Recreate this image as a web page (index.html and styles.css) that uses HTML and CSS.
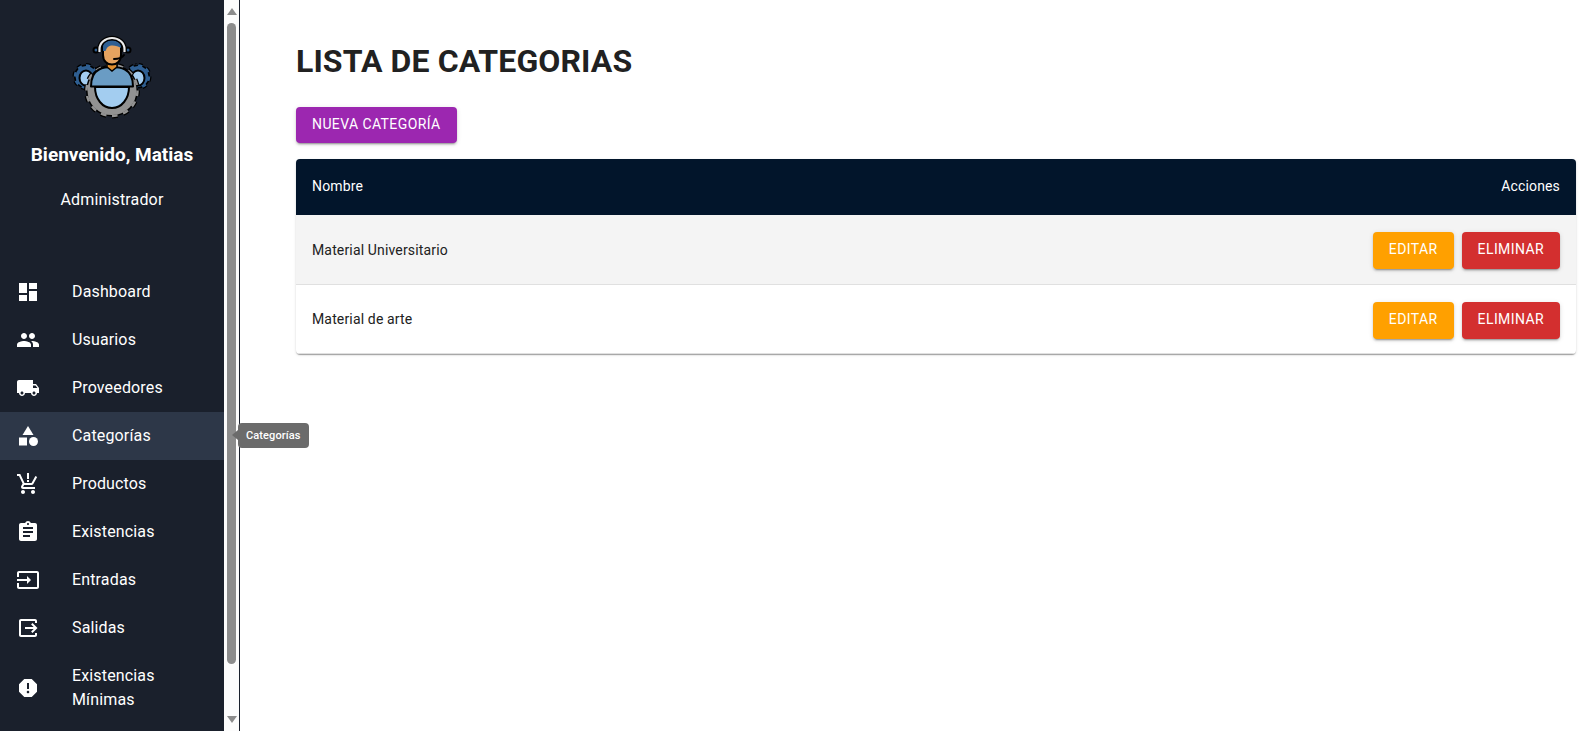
FILE: index.html
```html
<!DOCTYPE html>
<html lang="es">
<head>
<meta charset="utf-8">
<title>Lista de categorias</title>
<link rel="stylesheet" href="styles.css">
</head>
<body>
<div class="shell">
  <aside class="sidebar">
    <div class="sidebar-scroll">
      <header class="profile">
        <svg class="logo" viewBox="70 34 84 86" width="84" height="86" aria-hidden="true">
          <circle class="base" cx="86" cy="76.500" r="12"/>
          <circle class="side-teeth-o" cx="86" cy="76.500" r="11" pathLength="80"/>
          <circle class="side-fill" cx="86" cy="76.500" r="10.500"/>
          <circle class="side-teeth" cx="86" cy="76.500" r="11" pathLength="80"/>
          <ellipse class="light" cx="86" cy="78" rx="6.500" ry="7.500"/>
          <circle class="base" cx="138" cy="76.500" r="12"/>
          <circle class="side-teeth-o" cx="138" cy="76.500" r="11" pathLength="80"/>
          <circle class="side-fill" cx="138" cy="76.500" r="10.500"/>
          <circle class="side-teeth" cx="138" cy="76.500" r="11" pathLength="80"/>
          <ellipse class="light" cx="138" cy="78" rx="6.500" ry="7.500"/>
          <circle class="base" cx="112" cy="90.500" r="26"/>
          <circle class="big-teeth-o" cx="112" cy="90.500" r="26" pathLength="140"/>
          <circle class="big-fill" cx="112" cy="90.500" r="24.500"/>
          <circle class="big-teeth" cx="112" cy="90.500" r="25.500" pathLength="140"/>
          <path class="light" d="M95 87h34c0 12-7.500 21-17 21s-17-9-17-21z"/>
          <path class="torso" d="M91 86.500c0-8 2-14 8-17 4-2 7-2.500 13-2.500s9 .5 13 2.500c6 3 8 9 8 17z"/>
          <path class="neck" d="M107 63h10v4l-5 4-5-4z"/>
          <circle class="ear" cx="96" cy="50" r="2.500"/>
          <circle class="ear" cx="128" cy="50" r="2.500"/>
          <path class="head" d="M103 47c0-4 4-6.500 9-6.500s9 2.500 9 6.500v8c0 6-4 9.500-9 9.500s-9-3.500-9-9.500z"/>
          <path class="hair" d="M103 51v-4c0-4 4-6.500 9-6.500s9 2.500 9 6.500v1c-3-2-8-3-11.500-2-2 .7-3 2.500-4 5z"/>
          <path class="band-o" d="M99.500 52v-3c0-6 5.500-11 12.500-11s12.500 5 12.500 11v3"/>
          <path class="band" d="M99.500 52v-3c0-6 5.500-11 12.500-11s12.500 5 12.500 11v3"/>
          <path class="mic" d="M124 55c-2 3-5 4-10 4"/>
        </svg>
        <h2 class="welcome">Bienvenido, Matias</h2>
        <p class="role">Administrador</p>
      </header>
      <nav class="menu">
        <a class="menu-item"><svg class="icon" viewBox="0 0 24 24"><path d="M3 13h8V3H3v10zm0 8h8v-6H3v6zm10 0h8V11h-8v10zm0-18v6h8V3h-8z"/></svg><span>Dashboard</span></a>
        <a class="menu-item"><svg class="icon" viewBox="0 0 24 24"><path d="M16 11c1.660 0 2.990-1.340 2.990-3S17.660 5 16 5c-1.660 0-3 1.340-3 3s1.340 3 3 3zm-8 0c1.660 0 2.990-1.340 2.990-3S9.660 5 8 5C6.340 5 5 6.340 5 8s1.340 3 3 3zm0 2c-2.330 0-7 1.170-7 3.500V19h14v-2.500c0-2.330-4.670-3.500-7-3.500zm8 0c-.29 0-.62.02-.97.05 1.160.84 1.970 1.970 1.970 3.450V19h6v-2.500c0-2.330-4.670-3.500-7-3.500z"/></svg><span>Usuarios</span></a>
        <a class="menu-item"><svg class="icon" viewBox="0 0 24 24"><path d="M20 8h-3V4H3c-1.100 0-2 .9-2 2v11h2c0 1.660 1.340 3 3 3s3-1.340 3-3h6c0 1.660 1.340 3 3 3s3-1.340 3-3h2v-5l-3-4zM6 18.500c-.83 0-1.500-.67-1.500-1.500s.67-1.500 1.500-1.500 1.500.67 1.500 1.500-.67 1.500-1.500 1.500zm13.500-9l1.960 2.500H17V9.500h2.500zm-1.500 9c-.83 0-1.500-.67-1.500-1.500s.67-1.500 1.500-1.500 1.500.67 1.500 1.500-.67 1.500-1.500 1.500z"/></svg><span>Proveedores</span></a>
        <a class="menu-item is-active"><svg class="icon" viewBox="0 0 24 24"><path d="M12 2l-5.500 9h11z"/><circle cx="17.500" cy="17.500" r="4.500"/><path d="M3 13.500h8v8H3z"/></svg><span>Categorías</span></a>
        <a class="menu-item"><svg class="icon" viewBox="0 0 24 24"><path d="M11 1h2v6h-2zM11 8h2v2h-2z"/><path d="M7 18c-1.100 0-1.990.9-1.990 2S5.900 22 7 22s2-.9 2-2-.9-2-2-2zm10 0c-1.100 0-1.990.9-1.990 2s.89 2 1.990 2 2-.9 2-2-.9-2-2-2zm-9.830-3.250l.03-.12.9-1.630h7.450c.75 0 1.410-.41 1.750-1.030l3.860-7.010L19.420 4h-.01l-1.100 2-2.760 5H8.530l-.13-.27L6.160 6l-.95-2-.94-2H1v2h2l3.600 7.590-1.350 2.450c-.16.28-.25.61-.25.96 0 1.100.9 2 2 2h12v-2H7.420c-.13 0-.25-.11-.25-.25z"/></svg><span>Productos</span></a>
        <a class="menu-item"><svg class="icon" viewBox="0 0 24 24"><path d="M19 3h-4.180C14.400 1.840 13.300 1 12 1c-1.300 0-2.400.84-2.820 2H5c-1.100 0-2 .9-2 2v14c0 1.100.9 2 2 2h14c1.100 0 2-.9 2-2V5c0-1.100-.9-2-2-2zm-7 0c.55 0 1 .45 1 1s-.45 1-1 1-1-.45-1-1 .45-1 1-1zm2 14H7v-2h7v2zm3-4H7v-2h10v2zm0-4H7V7h10v2z"/></svg><span>Existencias</span></a>
        <a class="menu-item"><svg class="icon" viewBox="0 0 24 24"><path d="M21 3.010H3c-1.100 0-2 .9-2 2V9h2V4.990h18v14.030H3V15H1v4.010c0 1.100.9 1.980 2 1.980h18c1.100 0 2-.88 2-1.980v-14c0-1.110-.9-2-2-2zM11 16l4-4-4-4v3H1v2h10v3z"/></svg><span>Entradas</span></a>
        <a class="menu-item"><svg class="icon" viewBox="0 0 24 24"><path d="M15.090 15.590L16.500 17l5-5-5-5-1.410 1.410L17.670 11H9v2h8.670l-2.580 2.590z"/><path d="M19 19H5V5h14v2h2V5c0-1.100-.9-2-2-2H5c-1.110 0-2 .9-2 2v14c0 1.100.89 2 2 2h14c1.100 0 2-.9 2-2v-2h-2v2z"/></svg><span>Salidas</span></a>
        <a class="menu-item"><svg class="icon" viewBox="0 0 24 24"><path d="M15.730 3H8.270L3 8.270v7.460L8.270 21h7.460L21 15.730V8.270L15.730 3zM12 17.300c-.72 0-1.300-.58-1.300-1.300 0-.72.58-1.300 1.300-1.300.72 0 1.300.58 1.300 1.300 0 .72-.58 1.300-1.300 1.300zm1-4.300h-2V7h2v6z"/></svg><span>Existencias Mínimas</span></a>
      </nav>
    </div>
    <div class="scrollbar" aria-hidden="true">
      <i class="arrow arrow-up"></i>
      <i class="thumb"></i>
      <i class="arrow arrow-down"></i>
    </div>
  </aside>
  <div class="tooltip">Categorías</div>
  <main class="content">
    <h1 class="page-title">LISTA DE CATEGORIAS</h1>
    <button class="btn btn-purple btn-new">Nueva categoría</button>
    <div class="table-card">
      <table class="table">
        <thead>
          <tr><th>Nombre</th><th class="right">Acciones</th></tr>
        </thead>
        <tbody>
          <tr class="odd">
            <td class="name">Material Universitario</td>
            <td class="right"><div class="actions"><button class="btn btn-orange">Editar</button><button class="btn btn-red">Eliminar</button></div></td>
          </tr>
          <tr class="even">
            <td class="name">Material de arte</td>
            <td class="right"><div class="actions"><button class="btn btn-orange">Editar</button><button class="btn btn-red">Eliminar</button></div></td>
          </tr>
        </tbody>
      </table>
    </div>
  </main>
</div>
</body>
</html>
```

FILE: styles.css
```css
* { box-sizing: border-box; }
html, body { margin: 0; height: 100%; }
body {
  font-family: Roboto, "Liberation Sans", sans-serif;
  color: #212121;
  background: #fff;
  overflow: hidden;
}
.shell { display: flex; height: 731px; position: relative; }

.sidebar {
  flex: 0 0 240px;
  display: flex;
  height: 100%;
  border-right: 1px solid #1a202c;
}
.sidebar-scroll {
  flex: 0 0 224px;
  background: #1a202c;
  color: #fff;
  overflow: hidden;
}
.profile { padding-top: 34px; text-align: center; }
.logo { display: block; margin: 0 auto; }
.welcome { margin: 21px 0 0; font-size: 19px; line-height: 27px; font-weight: 700; }
.role { margin: 20px 0 0; font-size: 16px; line-height: 24px; letter-spacing: 0.15px; }

.logo .base { fill: #000; }
.logo .side-fill { fill: #2f5f92; }
.logo .side-teeth-o { fill: none; stroke: #000; stroke-width: 5; stroke-dasharray: 5 5; }
.logo .side-teeth { fill: none; stroke: #2f5f92; stroke-width: 2.500; stroke-dasharray: 5 5; }
.logo .big-teeth-o { fill: none; stroke: #000; stroke-width: 4; stroke-dasharray: 5 5; }
.logo .big-fill { fill: #929292; }
.logo .big-teeth { fill: none; stroke: #929292; stroke-width: 2.500; stroke-dasharray: 5 5; }
.logo .light { fill: #a3cdf0; stroke: #000; stroke-width: 2; }
.logo .torso { fill: #6a9cc4; stroke: #000; stroke-width: 2; stroke-linejoin: round; }
.logo .neck { fill: #e08e2e; stroke: #000; stroke-width: 1.500; }
.logo .ear { fill: #2f5f92; stroke: #000; stroke-width: 2; }
.logo .head { fill: #e5a360; stroke: #000; stroke-width: 2; }
.logo .hair { fill: #2f5f92; }
.logo .band-o { fill: none; stroke: #000; stroke-width: 4.500; }
.logo .band { fill: none; stroke: #ececec; stroke-width: 2.200; }
.logo .mic { fill: none; stroke: #000; stroke-width: 2; stroke-linecap: round; }

.menu { margin-top: 56px; }
.menu-item {
  display: flex;
  align-items: center;
  padding: 8px 16px;
  font-size: 16px;
  line-height: 24px;
  letter-spacing: 0.15px;
  color: #fff;
}
.menu-item > span { flex: 1; margin: 4px 0; }
.menu-item.is-active { background: #2d3748; }
.icon { flex: 0 0 24px; width: 24px; height: 24px; margin-right: 32px; fill: #fff; }

.scrollbar {
  flex: 1;
  display: flex;
  flex-direction: column;
  align-items: center;
  background: #fcfcfc;
  padding: 8px 0;
}
.arrow { width: 0; height: 0; border-left: 5px solid transparent; border-right: 5px solid transparent; }
.arrow-up { border-bottom: 7px solid #8c8c8c; }
.arrow-down { border-top: 7px solid #8c8c8c; }
.thumb {
  width: 9px;
  height: 641px;
  margin: 8px 0 52px;
  background: #8c8c8c;
  border-radius: 5px;
}

.tooltip {
  position: absolute;
  left: 238px;
  top: 423px;
  padding: 4px 8px;
  background: #6b6b6b;
  color: #fff;
  font-size: 11px;
  line-height: 17px;
  font-weight: 500;
  letter-spacing: 0.1px;
  border-radius: 4px;
}
.tooltip::before {
  content: "";
  position: absolute;
  left: -6px;
  top: 7px;
  border-top: 5.500px solid transparent;
  border-bottom: 5.500px solid transparent;
  border-right: 6px solid #6b6b6b;
}

.content { flex: 1; min-width: 0; padding: 40px 16px 0 56px; }
.page-title { margin: 0 0 25px; font-size: 32px; line-height: 42px; font-weight: 700; letter-spacing: 0.1px; color: #212121; }

.btn {
  display: inline-block;
  border: 0;
  border-radius: 4px;
  padding: 5px 16px 7px;
  font-family: inherit;
  font-size: 14px;
  line-height: 24.500px;
  font-weight: 400;
  letter-spacing: 0.4px;
  text-transform: uppercase;
  color: #fff;
  box-shadow: 0 3px 1px -2px rgba(0,0,0,.2), 0 2px 2px 0 rgba(0,0,0,.14), 0 1px 5px 0 rgba(0,0,0,.12);
}
.btn-purple { background: #9c27b0; }
.btn-orange { background: #ffa000; }
.btn-red { background: #d32f2f; }
.btn-new { display: block; height: 36px; margin-bottom: 16px; }

.table-card {
  border-radius: 4px;
  overflow: hidden;
  background: #fff;
  box-shadow: 0 2px 1px -1px rgba(0,0,0,.2), 0 1px 1px 0 rgba(0,0,0,.14), 0 1px 3px 0 rgba(0,0,0,.12);
}
.table { width: 100%; border-collapse: separate; border-spacing: 0; font-size: 14px; line-height: 24px; letter-spacing: 0.15px; }
.table th {
  height: 56px;
  padding: 15px 16px 17px;
  background: #02152b;
  color: #fff;
  font-weight: 400;
  text-align: left;
}
.table td { padding: 17px 16px 15px; color: #212121; border-bottom: 1px solid #e0e0e0; }
.table .odd td { background: #f4f4f4; padding-bottom: 15.500px; }
.table .even td { padding-bottom: 14.500px; }
.table td.name { padding-top: 16px; padding-bottom: 16px; }
.table .right { text-align: right; }
.actions { display: flex; justify-content: flex-end; gap: 8px; }
```
